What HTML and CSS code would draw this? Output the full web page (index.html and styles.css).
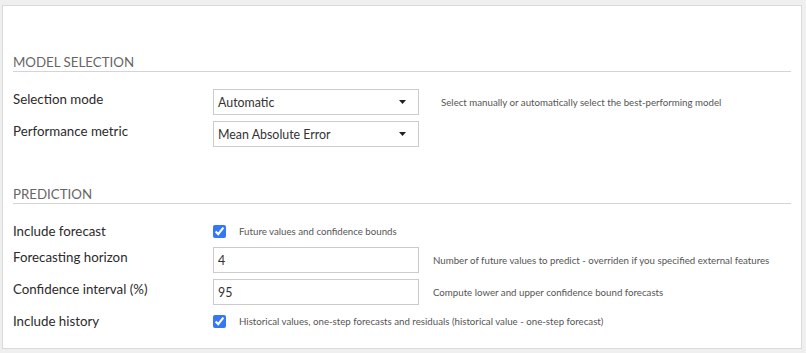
FILE: index.html
```html
<!DOCTYPE html>
<html lang="en">
<head>
    <meta charset="UTF-8">
    <title>Forecast settings</title>
    <link rel="stylesheet" href="styles.css">
</head>
<body>

    <div class="panel">
        <div class="section-title">Model selection</div>

        <div class="row">
            <label class="row-label">Selection mode</label>
            <div class="select">
                <span>Automatic</span>
                <svg class="caret" width="7" height="4" viewBox="0 0 7 4"><path d="M0 0h7L3.5 4z"/></svg>
            </div>
            <div class="help help-select">Select manually or automatically select the best-performing model</div>
        </div>
        <div class="row">
            <label class="row-label">Performance metric</label>
            <div class="select">
                <span>Mean Absolute Error</span>
                <svg class="caret" width="7" height="4" viewBox="0 0 7 4"><path d="M0 0h7L3.5 4z"/></svg>
            </div>
        </div>

        <div class="section-title second">Prediction</div>

        <div class="row row-check">
            <label class="row-label">Include forecast</label>
            <input type="checkbox" class="check" checked>
            <div class="help help-check">Future values and confidence bounds</div>
        </div>
        <div class="row">
            <label class="row-label">Forecasting horizon</label>
            <input type="text" class="field" value="4">
            <div class="help">Number of future values to predict - overriden if you specified external features</div>
        </div>
        <div class="row">
            <label class="row-label">Confidence interval (%)</label>
            <input type="text" class="field" value="95">
            <div class="help">Compute lower and upper confidence bound forecasts</div>
        </div>
        <div class="row row-check">
            <label class="row-label">Include history</label>
            <input type="checkbox" class="check" checked>
            <div class="help help-check">Historical values, one-step forecasts and residuals (historical value - one-step forecast)</div>
        </div>
    </div>

</body>
</html>
```

FILE: styles.css
```css
body {
    font-family: Lato, "Liberation Sans", sans-serif;
    background-color: #efefef;
    margin: 0;
    padding: 5px 4px 0 2px;
    color: #333;
}
.panel {
    background-color: #fff;
    border: 1px solid #d9d9d9;
    height: 342px;
    padding: 0 10px;
}
.section-title {
    margin-top: 47px;
    height: 18px;
    line-height: 18px;
    font-size: 13.3px;
    text-transform: uppercase;
    color: #666;
    border-bottom: 1px solid #d4d4d4;
    margin-bottom: 17px;
}
.section-title.second {
    margin-top: 38px;
}
.row {
    display: flex;
    align-items: center;
    height: 26px;
    margin-bottom: 6px;
}
.row-check {
    height: 20px;
}
.row-label {
    width: 200px;
    flex-shrink: 0;
    align-self: flex-start;
    line-height: 20px;
    font-size: 13.3px;
    color: #2b2b2b;
}
.select {
    position: relative;
    box-sizing: border-box;
    width: 206px;
    height: 26px;
    border: 1px solid #ccc;
    padding-left: 4px;
    display: flex;
    align-items: center;
    font-size: 12.4px;
    color: #333;
}
.caret {
    position: absolute;
    right: 12px;
    top: 10px;
    fill: #222;
}
.field {
    box-sizing: border-box;
    width: 206px;
    height: 26px;
    margin: 0;
    border: 1px solid #ccc;
    padding: 0 4px;
    font-family: inherit;
    font-size: 12.4px;
    color: #333;
    outline: none;
}
.check {
    width: 13px;
    height: 13px;
    margin: 0;
    accent-color: #3478f6;
}
.help {
    font-size: 9.7px;
    color: #555;
    margin-left: 14px;
    white-space: nowrap;
}
.help-select {
    margin-left: 22px;
}
.help-check {
    margin-left: 13px;
}
```
